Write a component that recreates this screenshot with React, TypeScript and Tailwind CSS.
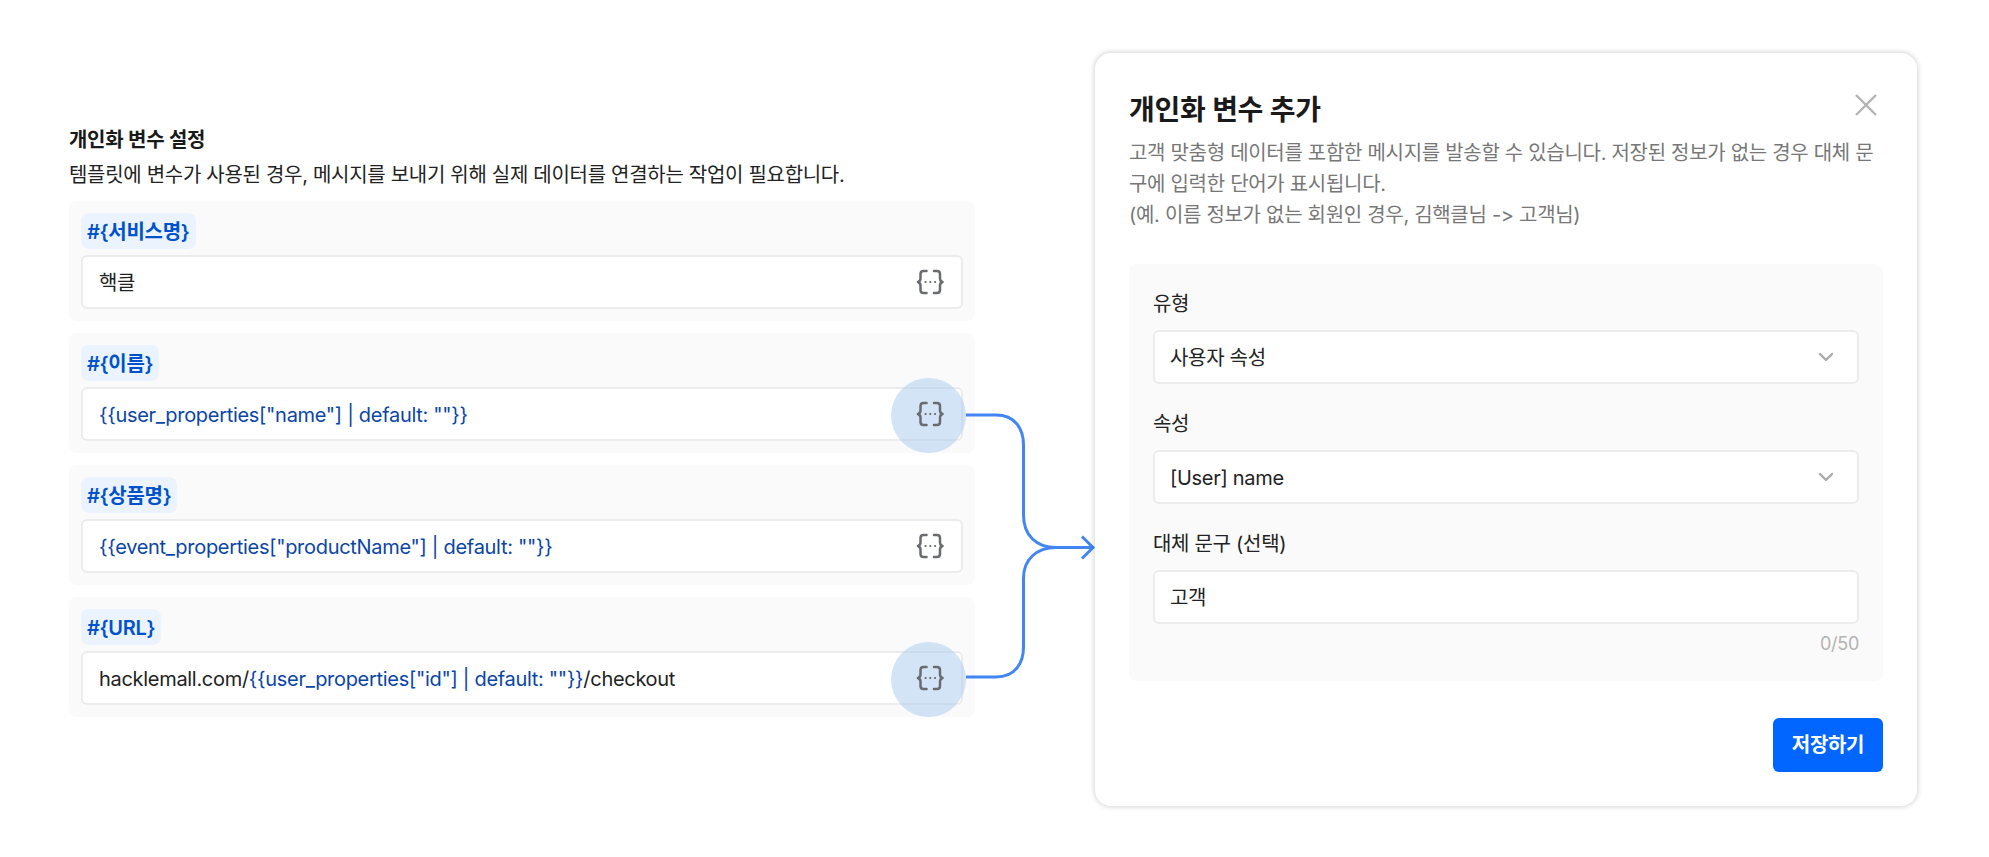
const font = { fontFamily: '"Inter", "Noto Sans CJK KR", sans-serif' };

function Braces() {
  return (
    <svg className="relative z-10" width="30" height="26" viewBox="0 0 30 26" fill="none" stroke="#686b70" strokeWidth="2.500" strokeLinecap="round" strokeLinejoin="round">
      <path d="M10.500 2H7.500C5.500 2 4.500 3 4.500 5V9.500C4.500 11.200 3.600 12.400 2 13C3.600 13.600 4.500 14.800 4.500 16.500V21C4.500 23 5.500 24 7.500 24H10.500" />
      <path d="M18 2H21C23 2 24 3 24 5V9.500C24 11.200 24.900 12.400 26.500 13C24.900 13.600 24 14.800 24 16.500V21C24 23 23 24 21 24H18" />
      <path d="M9.500 13H9.600M14.250 13H14.350M19 13H19.100" strokeWidth="2.200" />
    </svg>
  );
}

function VarRow({ label, children, highlight }: { label: string; children: React.ReactNode; highlight?: boolean }) {
  return (
    <div className="h-[120px] rounded-[8px] bg-[#fafafa] px-[12px] pt-[12px]">
      <div className="flex h-[36px] w-fit items-center rounded-[8px] bg-[#ebf3fe] px-[6px] pt-[2px] text-[20px] font-semibold text-[#0052cc]">{label}</div>
      <div className="relative mt-[6px] flex h-[54px] items-center justify-between rounded-[6px] border-2 border-[#ececec] bg-white pl-[16px] pr-[15px] text-[20px] text-[#222222]">
        <span className="pt-[1px]">{children}</span>
        <Braces />
        {highlight && <div className="absolute right-[-5px] top-[-11px] h-[75px] w-[75px] rounded-full bg-[#a6c9ee]/50" />}
      </div>
    </div>
  );
}

function Select({ label, value }: { label: string; value: string }) {
  return (
    <div className="mb-[24px]">
      <div className="mb-[11px] pt-[1px] text-[20px] leading-[30px] text-[#222222]">{label}</div>
      <div className="flex h-[54px] items-center justify-between rounded-[6px] border-2 border-[#ececec] bg-white pl-[15px] pr-[23px] text-[20px] text-[#222222]">
        <span className="pt-[1px]">{value}</span>
        <svg width="16" height="10" viewBox="0 0 16 10" fill="none" stroke="#a9a9a9" strokeWidth="2.400" strokeLinecap="round" strokeLinejoin="round"><path d="M2 2L8 8L14 2" /></svg>
      </div>
    </div>
  );
}

export default function App() {
  const blue = "text-[#0b45a6]";
  return (
    <div style={font} className="relative flex h-[857px] w-[1989px] bg-white tracking-[-0.3px]">
      <div className="ml-[69px] w-[906px] pt-[125px]">
        <div className="text-[20px] font-semibold leading-[30px] text-[#1a1a1a]">개인화 변수 설정</div>
        <div className="mt-[5px] text-[20px] leading-[30px] text-[#222222]">템플릿에 변수가 사용된 경우, 메시지를 보내기 위해 실제 데이터를 연결하는 작업이 필요합니다.</div>
        <div className="mt-[11px] flex flex-col gap-[12px]">
          <VarRow label="#{서비스명}">핵클</VarRow>
          <VarRow label="#{이름}" highlight><span className={blue}>{'{{user_properties["name"] | default: ""}}'}</span></VarRow>
          <VarRow label="#{상품명}"><span className={blue}>{'{{event_properties["productName"] | default: ""}}'}</span></VarRow>
          <VarRow label="#{URL}" highlight>hacklemall.com/<span className={blue}>{'{{user_properties["id"] | default: ""}}'}</span>/checkout</VarRow>
        </div>
      </div>

      <svg className="absolute left-[966px] top-[400px]" width="130" height="290" viewBox="0 0 130 290" fill="none" stroke="#4285f4" strokeWidth="3">
        <path d="M0 15H30C50 15 57.500 30 57.500 45V115C57.500 135 70 147.500 90 147.500H127" />
        <path d="M0 277H30C50 277 57.500 262 57.500 247V178C57.500 160 70 147.500 90 147.500" />
        <path d="M116 136.500L127 147.500L116 158.500" />
      </svg>

      <div className="absolute left-[1095px] top-[53px] h-[753px] w-[822px] rounded-[16px] bg-white px-[34px] pt-[35px] shadow-[0_0_5px_1px_rgba(0,0,0,0.17)]">
        <div className="flex items-start justify-between">
          <div className="pt-[2px] text-[28px] font-semibold leading-[40px] text-[#1a1a1a]">개인화 변수 추가</div>
          <svg className="mr-[5px] mt-[5px]" width="24" height="24" viewBox="0 0 24 24" fill="none" stroke="#b3b3b3" strokeWidth="2.400"><path d="M2 2L22 22M22 2L2 22" /></svg>
        </div>
        <div className="mt-[8px] break-all text-[20px] leading-[31px] text-[#777777]">
          고객 맞춤형 데이터를 포함한 메시지를 발송할 수 있습니다. 저장된 정보가 없는 경우 대체 문구에 입력한 단어가 표시됩니다.<br />
          (예. 이름 정보가 없는 회원인 경우, 김핵클님 -&gt; 고객님)
        </div>
        <div className="mt-[33px] h-[417px] rounded-[8px] bg-[#fafafa] px-[24px] pt-[24px]">
          <Select label="유형" value="사용자 속성" />
          <Select label="속성" value="[User] name" />
          <div className="mb-[11px] pt-[1px] text-[20px] leading-[30px] text-[#222222]">대체 문구 (선택)</div>
          <div className="flex h-[54px] items-center rounded-[6px] border-2 border-[#ececec] bg-white pl-[15px] text-[20px] text-[#222222]"><span className="pt-[1px]">고객</span></div>
          <div className="mt-[8px] text-right text-[18px] leading-[24px] text-[#b3b3b3]">0/50</div>
        </div>
        <div className="mt-[37px] flex justify-end">
          <div className="flex h-[54px] w-[110px] items-center justify-center rounded-[6px] bg-[#0066ff] text-[20px] font-semibold text-white">저장하기</div>
        </div>
      </div>
    </div>
  );
}
